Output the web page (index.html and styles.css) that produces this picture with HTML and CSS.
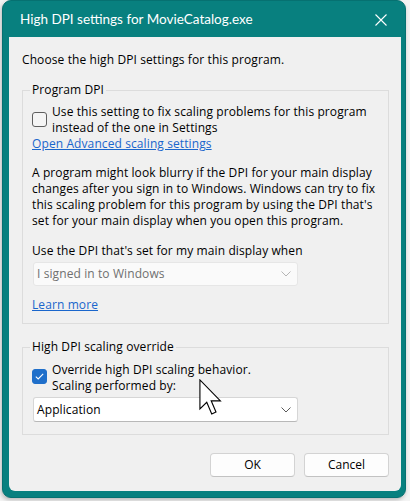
FILE: index.html
```html
<!DOCTYPE html>
<html>
<head>
<meta charset="utf-8">
<link rel="stylesheet" href="styles.css">
</head>
<body>
<div class="window">
  <div class="titlebar">
    <span class="title">High DPI settings for MovieCatalog.exe</span>
    <svg class="close" width="12" height="12" viewBox="0 0 12 12"><path d="M0.5 0.5 L11.5 11.5 M11.5 0.5 L0.5 11.5" stroke="#fff" stroke-width="1.1" fill="none"/></svg>
  </div>
  <div class="content">
    <p class="intro">Choose the high DPI settings for this program.</p>
    <fieldset class="group group-dpi">
      <legend>Program DPI</legend>
      <div class="check-row">
        <span class="box"></span>
        <span class="check-label">Use this setting to fix scaling problems for this program<br>instead of the one in Settings</span>
      </div>
      <a class="link">Open Advanced scaling settings</a>
      <p class="para">A program might look blurry if the DPI for your main display<br>changes after you sign in to Windows. Windows can try to fix<br>this scaling problem for this program by using the DPI that's<br>set for your main display when you open this program.</p>
      <p class="use">Use the DPI that's set for my main display when</p>
      <div class="select disabled">
        <span>I signed in to Windows</span>
        <svg class="chev" width="10" height="6" viewBox="0 0 10 6"><path d="M0.5 0.5 L5 5 L9.5 0.5" stroke="#b5b5b5" stroke-width="1" fill="none"/></svg>
      </div>
      <a class="link learn">Learn more</a>
    </fieldset>
    <fieldset class="group group-override">
      <legend>High DPI scaling override</legend>
      <div class="check-row">
        <span class="box checked"><svg width="9" height="7" viewBox="0 0 9 7"><path d="M0.8 3.6 L3.2 5.9 L8.2 0.9" stroke="#fff" stroke-width="1.1" fill="none"/></svg></span>
        <span class="check-label">Override high DPI scaling behavior.<br>Scaling performed by:</span>
      </div>
      <div class="select">
        <span>Application</span>
        <svg class="chev" width="10" height="6" viewBox="0 0 10 6"><path d="M0.5 0.5 L5 5 L9.5 0.5" stroke="#5a5a5a" stroke-width="1" fill="none"/></svg>
      </div>
    </fieldset>
    <div class="buttons">
      <button class="btn">OK</button>
      <button class="btn">Cancel</button>
    </div>
    <svg class="cursor" width="24" height="37" viewBox="0 0 13 20"><path d="M0.5 0.5 L0.5 16.2 L4.2 12.6 L6.9 18.9 L9.2 17.9 L6.6 11.8 L11.6 11.8 Z" fill="#fff" stroke="#000" stroke-width="0.6" stroke-linejoin="miter"/></svg>
  </div>
</div>
</body>
</html>
```
FILE: styles.css
```css
* { box-sizing: border-box; }
html, body { margin: 0; padding: 0; }
body {
  background: #f4f4f4;
  width: 410px;
  height: 501px;
  overflow: hidden;
  font-family: "Segoe UI", "Open Sans", "Noto Sans", sans-serif;
  font-size: 12px;
  line-height: 16px;
  letter-spacing: 0.1px;
  color: #000;
}
.window {
  margin-left: 2px;
  width: 404px;
  height: 498px;
  background: #08807f;
  border-radius: 9px;
  border: 1px solid #067171;
  padding: 0 4px 6px 6px;
  display: flex;
  flex-direction: column;
  box-shadow: -1px 2px 4px rgba(0,0,0,0.25);
}
.titlebar {
  height: 36px;
  flex: none;
  display: flex;
  align-items: center;
  justify-content: space-between;
  padding: 0 14px 0 11px;
}
.title {
  color: #fff;
  font-family: "Segoe UI", Lato, "Open Sans", sans-serif;
  font-size: 13.5px;
  letter-spacing: 0;
  line-height: 20px;
  margin-top: -1px;
}
.close { margin-top: 2px; }
.content {
  position: relative;
  flex: 1;
  background: #f0f0f0;
  border-radius: 0 0 6px 6px;
  padding: 15px 12px 0 13px;
  display: flex;
  flex-direction: column;
}
.intro { margin: 0 0 14px 0; }
.group {
  margin: 0;
  border: 1px solid #dcdcdc;
  padding: 0 8px 10px 9px;
  display: flex;
  flex-direction: column;
  align-items: flex-start;
}
.group legend {
  padding: 0 2px;
  margin-left: -2px;
  line-height: 16px;
  margin-top: -2px;
}
.group-override { margin-top: 15px; padding-bottom: 12px; }
.check-row {
  display: flex;
  gap: 5px;
  margin-top: 6px;
}
.group-override .check-row { margin-top: 7px; }
.box {
  width: 15px;
  height: 15px;
  flex: none;
  margin-top: 8px;
  border: 1px solid #5f5f5f;
  border-radius: 3px;
  background: #f5f5f5;
  display: flex;
  align-items: center;
  justify-content: center;
}
.box.checked {
  background: #1f6fca;
  border-color: #1f6fca;
  margin-top: 7px;
}
.link {
  color: #1a66cc;
  text-decoration: underline;
}
.para { margin: 13px 0 0 0; }
.use { margin: 14px 0 0 0; }
.select {
  width: 265px;
  height: 24px;
  margin-top: 3px;
  margin-left: 1px;
  background: #fff;
  border: 1px solid #d6d6d6;
  border-bottom-color: #b8b8b8;
  border-radius: 3px;
  display: flex;
  align-items: center;
  justify-content: space-between;
  padding: 0 6px 0 3px;
}
.select.disabled {
  background: #fafafa;
  border-color: #e6e6e6;
  color: #707070;
}
.group-override .select { height: 25px; }
.learn { margin-top: 11px; }
.buttons {
  display: flex;
  justify-content: flex-end;
  gap: 9px;
  margin-top: 18px;
}
.btn {
  width: 85px;
  height: 24px;
  font: inherit;
  color: #000;
  background: #fdfdfd;
  border: 1px solid #d3d3d3;
  border-bottom-color: #c2c2c2;
  border-radius: 4px;
  padding: 0;
}
.cursor {
  position: absolute;
  left: 190px;
  top: 342px;
}
```
